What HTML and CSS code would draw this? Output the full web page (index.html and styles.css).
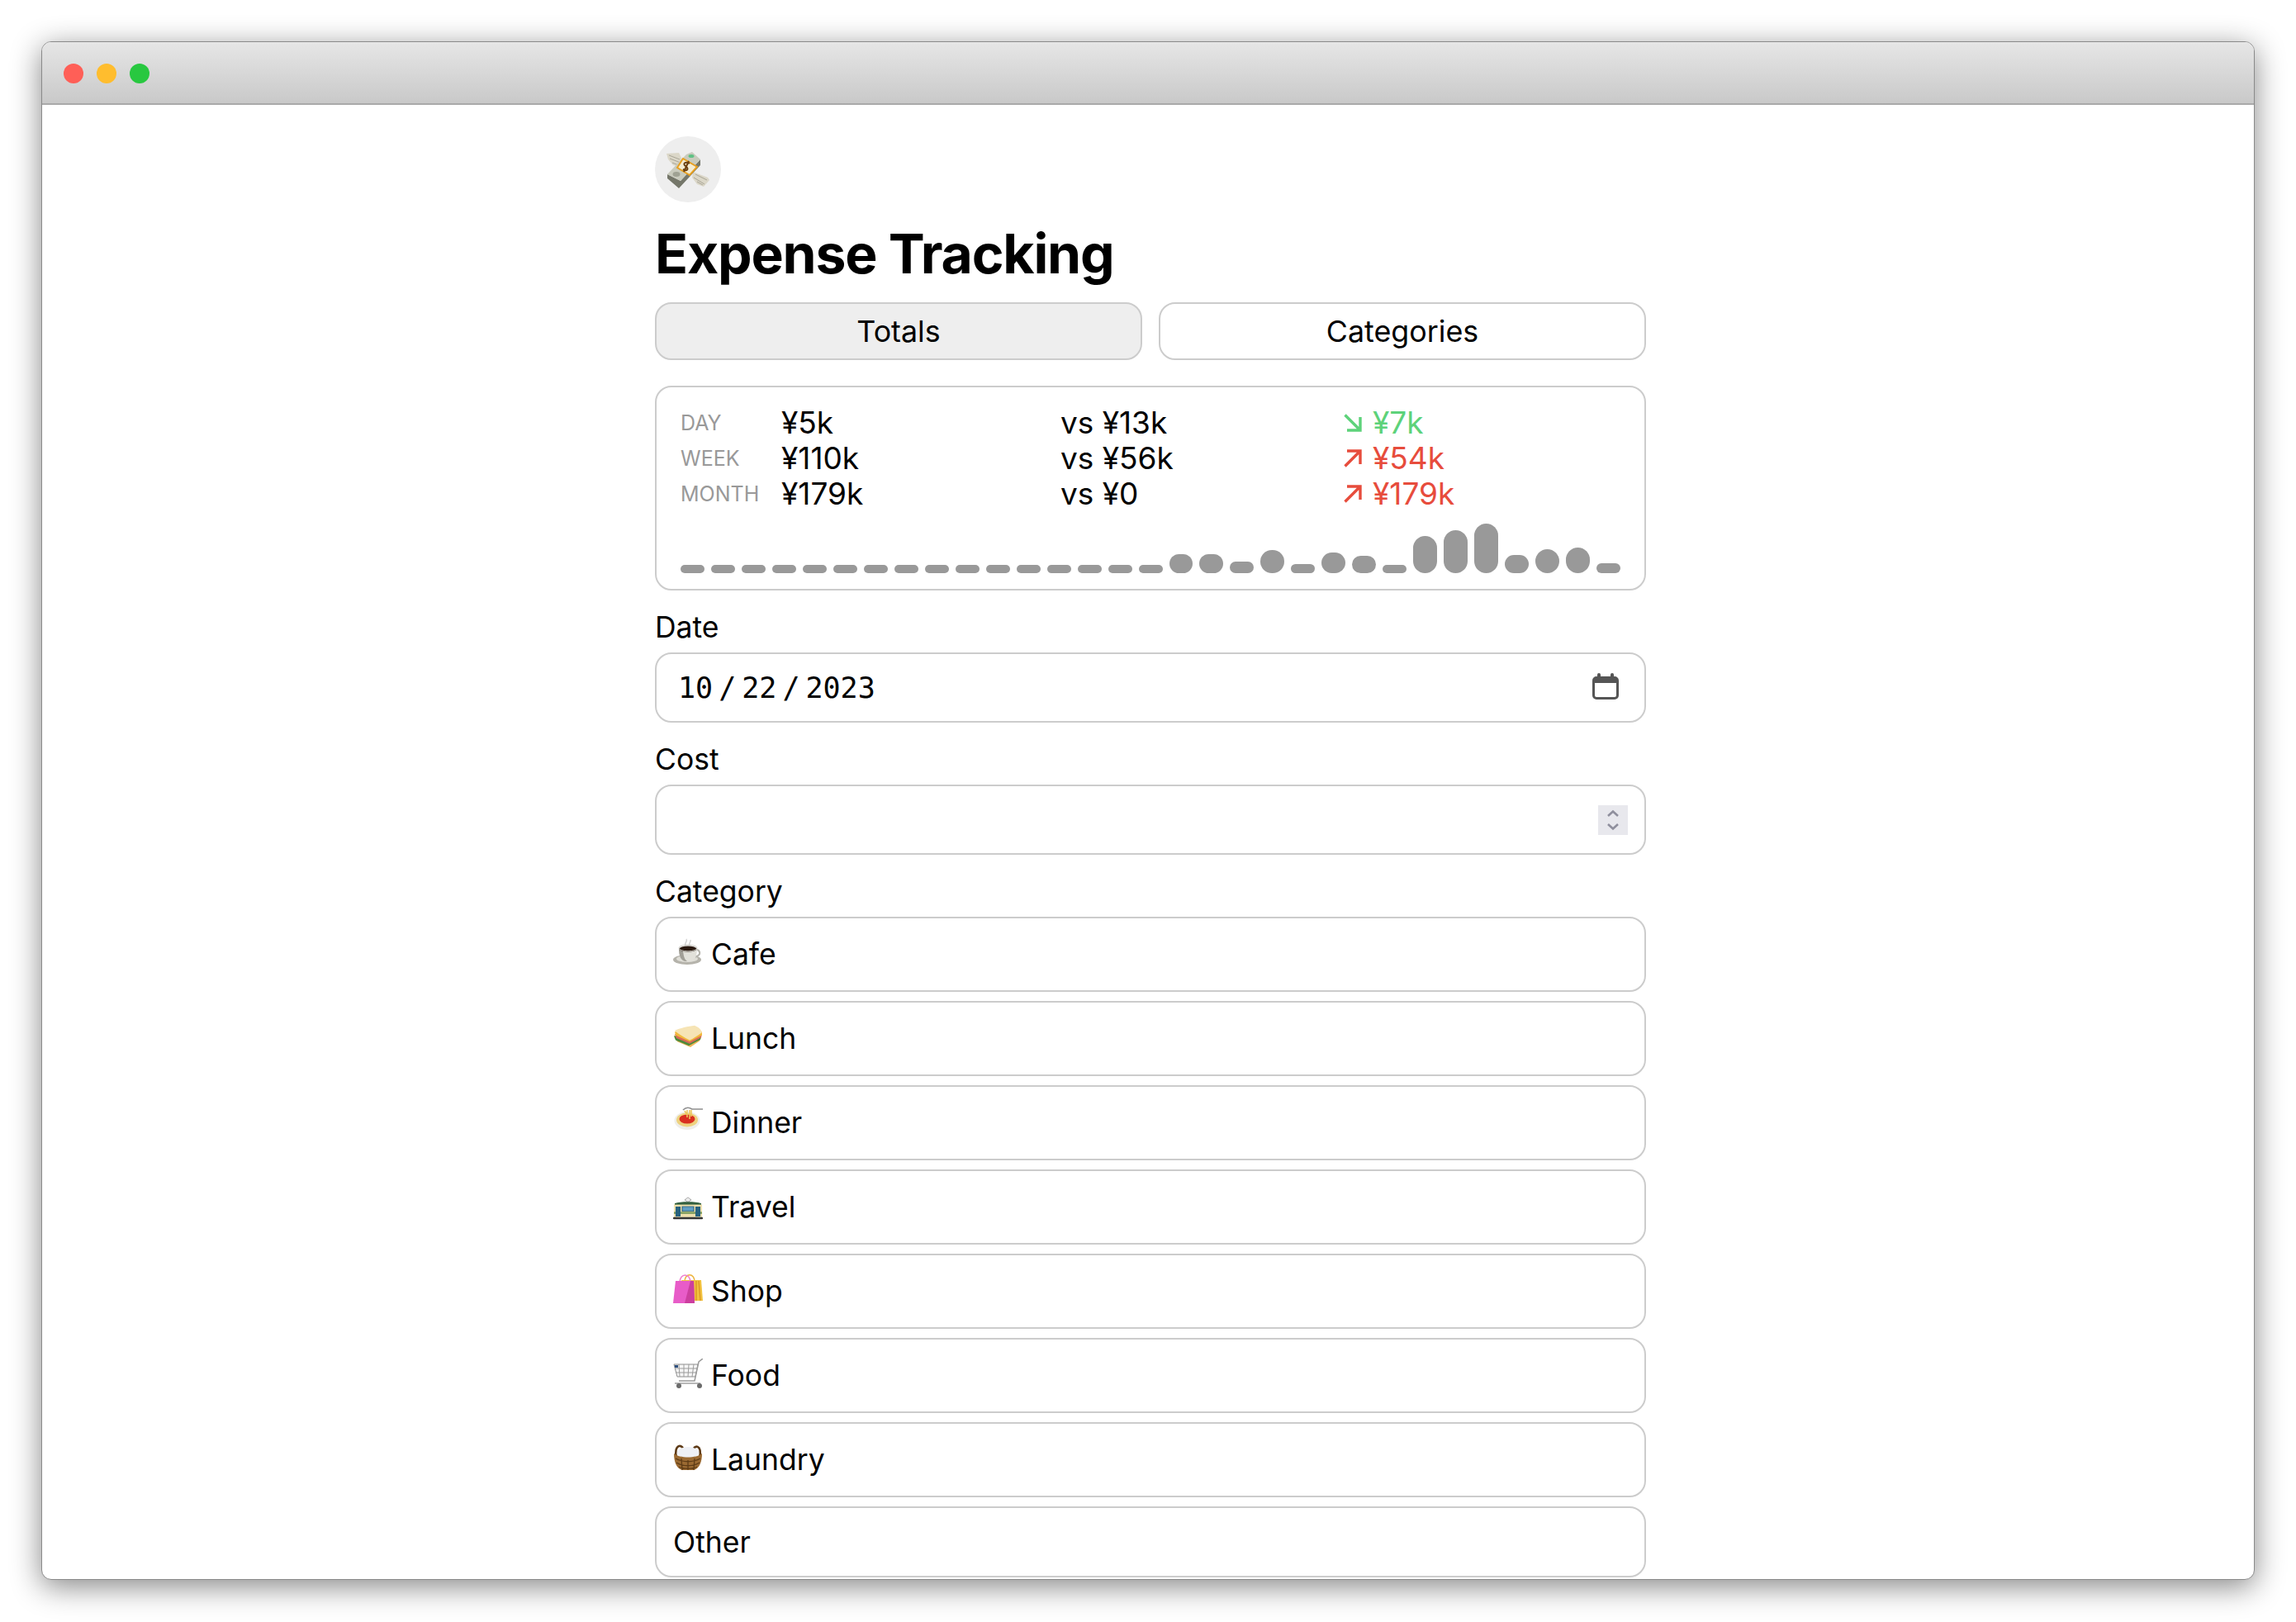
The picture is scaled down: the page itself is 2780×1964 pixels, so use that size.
FILE: index.html
```html
<!DOCTYPE html>
<html lang="en">
<head>
    <meta charset="UTF-8">
    <title>Expense Tracking</title>
    <link rel="stylesheet" href="styles.css">
</head>
<body>
<div class="stage">
    <div class="window">
        <div class="titlebar">
            <span class="dot dot-red"></span>
            <span class="dot dot-yellow"></span>
            <span class="dot dot-green"></span>
        </div>
        <div class="content">
            <main class="column">
                <div class="avatar">
                    <svg width="52" height="45" viewBox="0 0 52 45">
                        <path d="M0 3 L15 2 L20 12 L18 20 L8 17 L2 10Z" fill="#dbd7c8"/>
                        <path d="M3 5 L16 10 M4 9 L17 14 M7 14 L17 18" stroke="#a9a596" stroke-width="1"/>
                        <path d="M32 25 L50 32 L52 35 L45 43 L37 40 L31 32Z" fill="#dbd7c8"/>
                        <path d="M35 28 L49 35 M33 32 L46 40 M37 37 L44 41" stroke="#a9a596" stroke-width="1"/>
                        <path d="M1 28 L17 36 L41 10 L41 17 L15 45 L1 33Z" fill="#75776a"/>
                        <path d="M1 28 L24 4 L31 1 L41 10 L17 36Z" fill="#c9cbbd"/>
                        <ellipse cx="30" cy="6" rx="3.500" ry="2" fill="#5fc184"/>
                        <ellipse cx="12" cy="28" rx="4.500" ry="3" fill="#9fa293"/>
                        <path d="M13 20 L20 9 L37 19 L28 29Z" fill="#f4ecd2" stroke="#e8a020" stroke-width="2"/>
                        <path d="M28 15 C23 12 19 15 23 18 C27 21 26 25 20 22 M27 12 L21 25" fill="none" stroke="#6a3f10" stroke-width="2"/>
                    </svg>
                </div>
                <h1 class="title">Expense Tracking</h1>

                <div class="tabs">
                    <button class="tab tab-active">Totals</button>
                    <button class="tab">Categories</button>
                </div>

                <section class="stats">
                    <div class="stats-grid">
                        <span class="period">DAY</span><span>¥5k</span><span>vs ¥13k</span>
                        <span class="delta delta-down">
                            <svg width="22" height="22" viewBox="0 0 22 22"><path d="M1.500 1.500 L19.500 19.500 M4 20 H20 V4" fill="none" stroke="currentColor" stroke-width="3.400"/></svg>
                            ¥7k
                        </span>
                        <span class="period">WEEK</span><span>¥110k</span><span>vs ¥56k</span>
                        <span class="delta delta-up">
                            <svg width="22" height="22" viewBox="0 0 22 22"><path d="M1.500 20.500 L19.500 2.500 M4 2 H20 V18" fill="none" stroke="currentColor" stroke-width="3.400"/></svg>
                            ¥54k
                        </span>
                        <span class="period">MONTH</span><span>¥179k</span><span>vs ¥0</span>
                        <span class="delta delta-up">
                            <svg width="22" height="22" viewBox="0 0 22 22"><path d="M1.500 20.500 L19.500 2.500 M4 2 H20 V18" fill="none" stroke="currentColor" stroke-width="3.400"/></svg>
                            ¥179k
                        </span>
                    </div>
                    <div class="bars">
                        <i style="height:10px"></i><i style="height:10px"></i><i style="height:10px"></i><i style="height:10px"></i>
                        <i style="height:10px"></i><i style="height:10px"></i><i style="height:10px"></i><i style="height:10px"></i>
                        <i style="height:10px"></i><i style="height:10px"></i><i style="height:10px"></i><i style="height:10px"></i>
                        <i style="height:10px"></i><i style="height:10px"></i><i style="height:10px"></i><i style="height:10px"></i>
                        <i style="height:23px"></i><i style="height:23px"></i><i style="height:14px"></i><i style="height:28px"></i>
                        <i style="height:11px"></i><i style="height:25px"></i><i style="height:21px"></i><i style="height:10px"></i>
                        <i style="height:45px"></i><i style="height:52px"></i><i style="height:60px"></i><i style="height:22px"></i>
                        <i style="height:29px"></i><i style="height:31px"></i><i style="height:12px"></i>
                    </div>
                </section>

                <label class="field-label">Date</label>
                <div class="input">
                    <div class="date-value"><span>10</span><span>/</span><span>22</span><span>/</span><span>2023</span></div>
                    <svg class="calendar" width="32" height="32" viewBox="0 0 32 32">
                        <path d="M8 0 a2 2 0 0 1 2 2 v2 h12 v-2 a2 2 0 0 1 4 0 v2 h1 a5 5 0 0 1 5 5 v18 a5 5 0 0 1 -5 5 h-22 a5 5 0 0 1 -5 -5 v-18 a5 5 0 0 1 5 -5 h1 v-2 a2 2 0 0 1 2 -2 z M3 12 v15 a2 2 0 0 0 2 2 h22 a2 2 0 0 0 2 -2 v-15 z" fill="#555" fill-rule="evenodd"/>
                    </svg>
                </div>

                <label class="field-label">Cost</label>
                <div class="input">
                    <span class="spinner">
                        <svg width="16" height="26" viewBox="0 0 16 26">
                            <path d="M2 8 L8 2.500 L14 8 M2 18 L8 23.500 L14 18" fill="none" stroke="#8f8f9d" stroke-width="2.600"/>
                        </svg>
                    </span>
                </div>

                <label class="field-label">Category</label>
                <div class="categories">
                    <button class="category">
                        <svg class="emoji" width="36" height="36" viewBox="0 0 36 36">
                            <path d="M15 10 C13 7 18 5 16 2 M20 10 C18 7 22 6 21 3" fill="none" stroke="#d4d4d4" stroke-width="1.500"/>
                            <ellipse cx="17" cy="27" rx="17" ry="6" fill="#b5b3ab"/>
                            <ellipse cx="17" cy="26" rx="13" ry="4" fill="#dfded7"/>
                            <path d="M29 15 a4 4 0 0 1 3 5 c-1 3 -5 3 -8 5" fill="none" stroke="#b5b4ad" stroke-width="2.200"/>
                            <path d="M7 13 H29 C29 22 27 29 19 29 H16 C9 29 7 22 7 13Z" fill="#e2e1da"/>
                            <path d="M7 13 H12 C12 22 14 27 17 29 H16 C9 29 7 22 7 13Z" fill="#a19f97"/>
                            <ellipse cx="18" cy="14" rx="10.500" ry="3.600" fill="#2a1910"/>
                            <ellipse cx="18" cy="13" rx="11" ry="3.800" fill="none" stroke="#c9c8c1" stroke-width="1"/>
                        </svg>
                        Cafe
                    </button>
                    <button class="category">
                        <svg class="emoji" width="36" height="36" viewBox="0 0 36 36">
                            <g transform="translate(0,3) scale(1,.85)">
                                <path d="M1 16 L5 25 L21 33 L32 24 L34 19 L17 22Z" fill="#f0b85a"/>
                                <path d="M1 17 L3 23 L19 31 L33 22 L34 17Z" fill="#4d8a3a"/>
                                <path d="M2 14 L4 20 L20 28 L34 19 L35 14Z" fill="#d86a58"/>
                                <path d="M2 11 L3 16 L20 25 L35 16 L35 11Z" fill="#f2b93b"/>
                                <path d="M2 9 C8 6 18 3 26 2 C30 4 34 7 35 12 C30 16 24 21 20 23 C14 19 6 14 2 9Z" fill="#f6e4b5"/>
                            </g>
                        </svg>
                        Lunch
                    </button>
                    <button class="category">
                        <svg class="emoji" width="36" height="36" viewBox="0 0 36 36">
                            <ellipse cx="17" cy="18" rx="15.500" ry="11" fill="#efeeea"/>
                            <ellipse cx="17" cy="17" rx="13" ry="8.500" fill="#eed27f"/>
                            <ellipse cx="17" cy="16" rx="9.500" ry="5.500" fill="#d92f1f"/>
                            <path d="M17 5 V14 M20 5 V16 M22 5 V13 M14 6 L17 11" fill="none" stroke="#ecc65e" stroke-width="1.600"/>
                            <path d="M12 5 C16 1 20 2 23 4 H36" fill="none" stroke="#8f8f8f" stroke-width="1.600"/>
                        </svg>
                        Dinner
                    </button>
                    <button class="category">
                        <svg class="emoji" width="36" height="36" viewBox="0 0 36 36">
                            <g transform="translate(0,8) scale(1,.8)">
                                <path d="M18 1 L22 5 L18 8 L14 5Z" fill="#eee" stroke="#888" stroke-width=".8"/>
                                <path d="M2 10 C8 7 28 7 34 10 V13 H2Z" fill="#33603f"/>
                                <rect x="1" y="12" width="34" height="19" fill="#eee0ad"/>
                                <rect x="1" y="23" width="34" height="3" fill="#7a9a5a"/>
                                <rect x="3" y="15" width="6" height="15" fill="#27627f"/>
                                <rect x="27" y="15" width="6" height="15" fill="#27627f"/>
                                <rect x="11" y="15" width="14" height="7" fill="#5f9dc4" stroke="#2b5f7b"/>
                                <rect x="0" y="31" width="36" height="3" rx="1" fill="#333"/>
                            </g>
                        </svg>
                        Travel
                    </button>
                    <button class="category">
                        <svg class="emoji" width="36" height="36" viewBox="0 0 36 36">
                            <path d="M14 9 C14 -2 26 -2 26 9" fill="none" stroke="#edb43c" stroke-width="1.500"/>
                            <path d="M10 7 H34 L36 32 H14Z" fill="#f2c23f"/>
                            <path d="M28 8 V32 M31 8 L33 32" stroke="#dd9a26" stroke-width="1.500"/>
                            <path d="M8 10 C8 -2 21 -2 21 10" fill="none" stroke="#f07fd0" stroke-width="1.500"/>
                            <path d="M3 8 H25 L26 35 H0Z" fill="#e85cc8"/>
                            <path d="M21 8 L25 8 L26 35 L14 35Z" fill="#cc3f9f"/>
                        </svg>
                        Shop
                    </button>
                    <button class="category">
                        <svg class="emoji" width="36" height="36" viewBox="0 0 36 36">
                            <path d="M1 7 H30 L27 22 H5Z" fill="#f6f6f6" stroke="#8d8d8d"/>
                            <path d="M7 7 L8 22 M13 7 L13 22 M19 7 L18 22 M25 7 L23 22 M2 12 H29 M3 17 H28" stroke="#9d9d9d" fill="none"/>
                            <path d="M36 0 L31 4 L26 27 H7" fill="none" stroke="#9a9a9a" stroke-width="1.500"/>
                            <rect x="2" y="8" width="4" height="3" fill="#2d4f7f"/>
                            <path d="M2 30 H33" stroke="#b0b0b0" stroke-width="1.800"/>
                            <circle cx="7" cy="33" r="3" fill="#6b6b6b"/>
                            <circle cx="32" cy="33" r="3" fill="#6b6b6b"/>
                        </svg>
                        Food
                    </button>
                    <button class="category">
                        <svg class="emoji" width="36" height="36" viewBox="0 0 36 36">
                            <path d="M4 18 C0 2 12 -1 14 12 M32 18 C36 3 25 0 23 12" fill="none" stroke="#5d3a16" stroke-width="2.600"/>
                            <ellipse cx="18" cy="12" rx="13" ry="7" fill="#eef0f5"/>
                            <path d="M1 13 C8 19 28 19 35 13 C35 23 32 31 25 33 H11 C4 31 1 23 1 13Z" fill="#9b6a32"/>
                            <path d="M3 19 C12 24 24 24 33 19 M4 24 C12 29 24 29 32 24 M7 29 C12 32 24 32 29 29 M10 19 L11 33 M18 21 V33 M26 19 L25 33" fill="none" stroke="#5f3c16" stroke-width="1.300"/>
                        </svg>
                        Laundry
                    </button>
                    <button class="category category-plain">Other</button>
                </div>
            </main>
        </div>
    </div>
</div>
</body>
</html>
```
FILE: styles.css
```css
html, body {
    margin: 0;
    background: #fff;
}
body {
    font-family: "Inter", "Noto Sans", sans-serif;
    color: #000;
}
.stage {
    height: 1964px;
    padding: 50px 50px 51px;
    box-sizing: border-box;
    overflow: hidden;
}
.window {
    height: 1863px;
    box-sizing: border-box;
    border: 1px solid #8a8a8a;
    border-radius: 12px;
    box-shadow: 0 8px 36px rgba(0, 0, 0, .48);
    background: #fff;
    overflow: hidden;
}
.titlebar {
    height: 76px;
    box-sizing: border-box;
    display: flex;
    align-items: center;
    gap: 16px;
    padding: 2px 0 0 26px;
    background: linear-gradient(#e6e6e6, #c9c9c9);
    border-bottom: 2px solid #a9a9a9;
}
.dot {
    width: 24px;
    height: 24px;
    border-radius: 50%;
}
.dot-red { background: #ff5f57; }
.dot-yellow { background: #ffbd2e; }
.dot-green { background: #28c840; }

.content {
    display: flex;
    justify-content: center;
    padding: 38px 0 0 6px;
}
.column {
    width: 1200px;
    display: flex;
    flex-direction: column;
}
.avatar {
    width: 80px;
    height: 80px;
    border-radius: 50%;
    background: #eee;
    display: flex;
    align-items: center;
    justify-content: center;
}
.title {
    margin: 0;
    height: 121px;
    line-height: 124px;
    font-size: 66px;
    font-weight: 700;
    letter-spacing: -1.200px;
}

.tabs {
    display: grid;
    grid-template-columns: 1fr 1fr;
    gap: 20px;
}
.tab {
    height: 70px;
    border: 2px solid #ccc;
    border-radius: 20px;
    background: #fff;
    font: 35.800px "Inter", sans-serif;
    color: #000;
    padding: 0;
}
.tab-active { background: #eee; }

.stats {
    margin-top: 31px;
    height: 248px;
    box-sizing: border-box;
    border: 2px solid #ccc;
    border-radius: 20px;
    padding: 21px 29px 19px;
}
.stats-grid {
    display: grid;
    grid-template-columns: 122px 338px 343px 1fr;
    grid-auto-rows: 43px;
    align-items: center;
    font-size: 37px;
}
.period {
    font-size: 25px;
    color: #999;
}
.delta {
    display: flex;
    align-items: center;
    gap: 13px;
}
.delta-down { color: #5dd27a; }
.delta-up { color: #e74c3c; }

.bars {
    margin-top: 15px;
    height: 60px;
    display: flex;
    align-items: flex-end;
    gap: 8px;
}
.bars i {
    width: 29px;
    border-radius: 15px;
    background: #999;
}

.field-label {
    height: 75px;
    display: flex;
    align-items: center;
    padding-top: 13px;
    box-sizing: border-box;
    font-size: 35.500px;
}
.input {
    height: 85px;
    box-sizing: border-box;
    border: 2px solid #ccc;
    border-radius: 20px;
    padding: 0 20px 0 26px;
    display: flex;
    align-items: center;
    justify-content: space-between;
}
.date-value {
    display: flex;
    gap: 7px;
    font: 35px "DejaVu Sans Mono", monospace;
}
.calendar { margin: -3px 11px 0 0; }
.spinner {
    width: 36px;
    height: 36px;
    margin-left: auto;
    background: #e8e8ed;
    display: flex;
    align-items: center;
    justify-content: center;
}

.categories {
    display: flex;
    flex-direction: column;
    gap: 11px;
}
.category {
    height: 91px;
    box-sizing: border-box;
    border: 2px solid #ccc;
    border-radius: 20px;
    background: #fff;
    padding: 0 0 0 20px;
    display: flex;
    align-items: center;
    gap: 10px;
    font: 35.500px "Inter", sans-serif;
    color: #000;
}
.category-plain {
    height: 86px;
    padding-left: 20px;
}
.emoji { margin-bottom: 6px; }
```
